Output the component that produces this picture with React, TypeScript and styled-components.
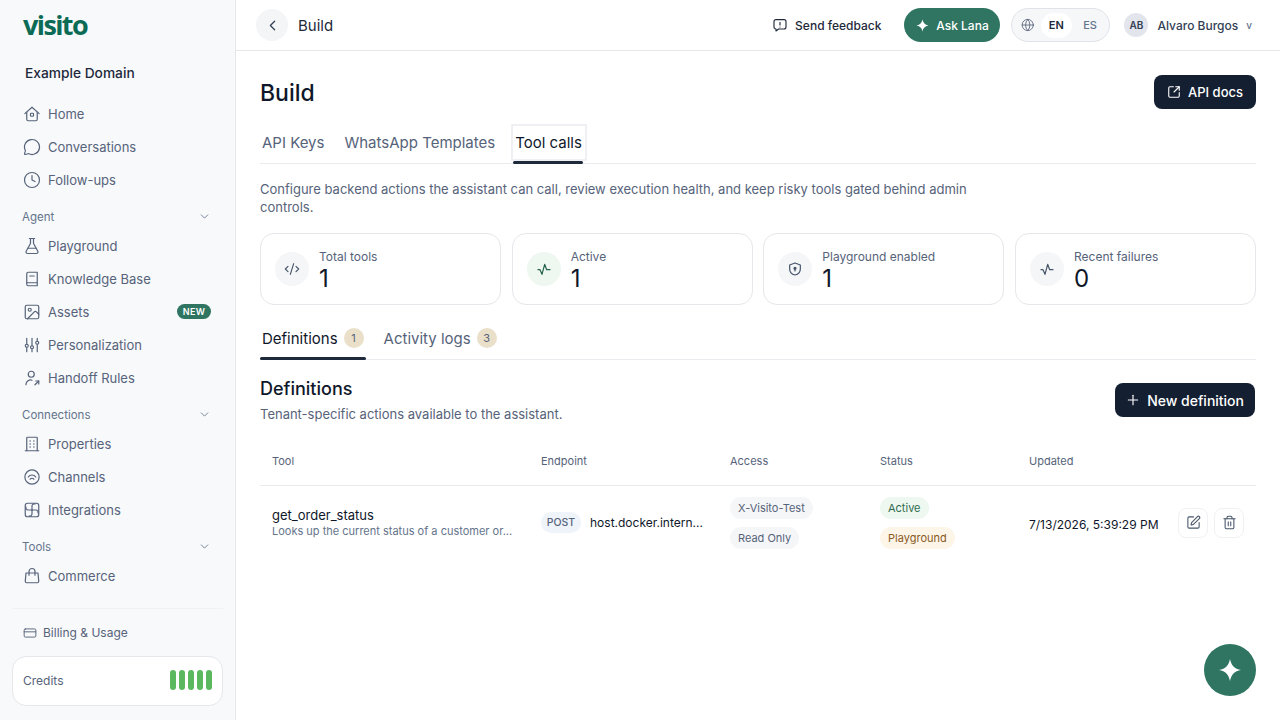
import React from 'react';
import styled, { createGlobalStyle } from 'styled-components';
import {
  ChevronDown,
  ChevronLeft,
  Clock,
  CodeXml,
  CreditCard,
  FlaskConical,
  Globe,
  Image as ImageIcon,
  MessageCircle,
  Plus,
  SquareArrowOutUpRight,
  SquarePen,
  Trash2,
} from 'lucide-react';

const GlobalStyle = createGlobalStyle`
  html, body {
    margin: 0;
    height: 100%;
    background: #fff;
    font-family: Inter, "Liberation Sans", sans-serif;
    color: #0f172a;
  }
  * { box-sizing: border-box; }
`;

const Shell = styled.div`
  display: flex;
  width: 1280px;
  height: 720px;
  overflow: hidden;
`;

const Sidebar = styled.aside`
  width: 236px;
  flex-shrink: 0;
  height: 720px;
  display: flex;
  flex-direction: column;
  background: #f8f9fb;
  border-right: 1px solid #e5e7eb;
  padding: 0 12px;
`;

const Logo = styled.div`
  height: 50px;
  padding: 0 0 2px 11px;
  display: flex;
  align-items: center;
  font-family: "Open Sans", sans-serif;
  font-size: 27px;
  font-weight: 700;
  letter-spacing: -1.6px;
  color: #0c6b55;
`;

const Domain = styled.div`
  height: 47px;
  padding: 0 13px 2px;
  display: flex;
  align-items: center;
  font-size: 13.75px;
  font-weight: 500;
  color: #1e293b;
`;

const Nav = styled.nav`
  display: flex;
  flex-direction: column;
`;

const NavItem = styled.div`
  height: 33px;
  display: flex;
  align-items: center;
  gap: 7px;
  padding: 0 12px 0 11px;
  font-size: 13px;
  color: #56637a;
  svg { flex-shrink: 0; }
`;

const NewBadge = styled.span`
  margin-left: auto;
  height: 15px;
  width: 34px;
  border-radius: 8px;
  background: #2f7561;
  color: #fff;
  font-size: 9px;
  font-weight: 600;
  letter-spacing: 0.3px;
  display: flex;
  align-items: center;
  justify-content: center;
`;

const SectionLabel = styled.div`
  height: 33px;
  padding: 8px 12px 0 10px;
  display: flex;
  align-items: center;
  justify-content: space-between;
  font-size: 11.5px;
  color: #64748b;
`;

const SidebarFooter = styled.div`
  margin-top: 16px;
  border-top: 1px solid #f0f1f4;
  padding-top: 7px;
`;

const BillingLink = styled.div`
  height: 33px;
  display: flex;
  align-items: center;
  gap: 6px;
  padding: 0 11px;
  font-size: 12px;
  color: #56637a;
`;

const CreditsCard = styled.div`
  margin-top: 7px;
  height: 50px;
  background: #fff;
  border: 1px solid #e5e7eb;
  border-radius: 14px;
  padding: 0 10px 2px;
  display: flex;
  align-items: center;
  justify-content: space-between;
  font-size: 12px;
  color: #56637a;
`;

const CreditBars = styled.div`
  display: flex;
  gap: 3px;
`;

const CreditBar = styled.span`
  width: 6px;
  height: 20px;
  border-radius: 3px;
  background: #5cb85f;
`;

const Content = styled.div`
  flex: 1;
  min-width: 0;
  display: flex;
  flex-direction: column;
`;

const Header = styled.header`
  height: 51px;
  flex-shrink: 0;
  display: flex;
  align-items: center;
  border-bottom: 1px solid #e5e7eb;
  padding: 0 20px;
`;

const BackButton = styled.button`
  width: 32px;
  height: 32px;
  border: 0;
  padding: 0;
  border-radius: 50%;
  background: #f4f5f7;
  color: #334155;
  display: flex;
  align-items: center;
  justify-content: center;
`;

const HeaderTitle = styled.div`
  margin-left: 10px;
  font-size: 15px;
  color: #1e293b;
`;

const Feedback = styled.div`
  margin-left: auto;
  display: flex;
  align-items: center;
  gap: 7px;
  font-size: 12px;
  font-weight: 500;
  color: #1e293b;
`;

const AskButton = styled.button`
  margin-left: 23px;
  height: 34px;
  width: 96px;
  border: 0;
  border-radius: 17px;
  background: #2f7561;
  color: #fff;
  font: 500 12px Inter, sans-serif;
  display: flex;
  align-items: center;
  justify-content: center;
  gap: 7px;
`;

const LangSwitch = styled.div`
  margin-left: 11px;
  height: 34px;
  width: 99px;
  border: 1px solid #dfe3e9;
  border-radius: 17px;
  background: #f6f7f9;
  display: flex;
  align-items: center;
  padding: 0 4px 0 9px;
  color: #56637a;
`;

const LangOption = styled.span<{ $active?: boolean }>`
  width: 32px;
  height: 25px;
  border-radius: 13px;
  display: flex;
  align-items: center;
  justify-content: center;
  font-size: 11px;
  font-weight: ${(props) => (props.$active ? 600 : 500)};
  color: ${(props) => (props.$active ? '#1e293b' : '#64748b')};
  background: ${(props) => (props.$active ? '#fff' : 'transparent')};
  &:first-of-type { margin-left: 6px; }
  &:last-of-type { margin-left: 3px; }
`;

const UserMenu = styled.div`
  margin-left: 14px;
  display: flex;
  align-items: center;
  font-size: 12px;
  font-weight: 500;
  color: #334155;
`;

const Avatar = styled.span`
  width: 24px;
  height: 24px;
  border-radius: 50%;
  background: #e2e5ec;
  color: #334155;
  font-size: 10px;
  font-weight: 600;
  display: flex;
  align-items: center;
  justify-content: center;
  margin-right: 9px;
`;

const Caret = styled.span`
  margin-left: 8px;
  margin-right: 8px;
  font-size: 10px;
  color: #64748b;
`;

const Main = styled.main`
  padding: 24px 24px 0;
`;

const TitleRow = styled.div`
  height: 34px;
  display: flex;
  align-items: center;
  justify-content: space-between;
`;

const PageTitle = styled.h1`
  margin: 1px 0 0;
  font-size: 23px;
  font-weight: 500;
  color: #0f172a;
`;

const DarkButton = styled.button`
  height: 34px;
  border: 0;
  border-radius: 8px;
  background: #151f32;
  color: #fff;
  font: 500 13px Inter, sans-serif;
  display: flex;
  align-items: center;
  gap: 7px;
  padding: 0 13px;
`;

const TopTabs = styled.div`
  margin-top: 15px;
  height: 40px;
  display: flex;
  align-items: stretch;
  border-bottom: 1px solid #e9ebef;
  padding-left: 2px;
  gap: 20px;
`;

const TopTab = styled.div<{ $active?: boolean }>`
  position: relative;
  display: flex;
  align-items: center;
  padding-bottom: 3px;
  font-size: 15px;
  color: ${(props) => (props.$active ? '#0f172a' : '#56637a')};
  ${(props) =>
    props.$active &&
    `
    &::before {
      content: '';
      position: absolute;
      left: -4px;
      right: -5px;
      top: 0;
      bottom: 2px;
      border: 2px solid #eef0f3;
    }
    &::after {
      content: '';
      position: absolute;
      left: -2px;
      right: -1px;
      bottom: -1px;
      height: 3px;
      border-radius: 2px;
      background: #1e293b;
    }
  `}
`;

const Description = styled.p`
  margin: 16px 0 0;
  max-width: 740px;
  font-size: 13px;
  line-height: 18px;
  color: #56637a;
`;

const StatGrid = styled.div`
  margin-top: 17px;
  display: grid;
  grid-template-columns: repeat(4, 1fr);
  gap: 10.67px;
`;

const StatCard = styled.div`
  height: 72px;
  border: 1px solid #e5e7eb;
  border-radius: 14px;
  padding: 0 14px;
  display: flex;
  align-items: center;
  gap: 10px;
`;

const StatIcon = styled.span<{ $green?: boolean }>`
  width: 34px;
  height: 34px;
  flex-shrink: 0;
  border-radius: 50%;
  display: flex;
  align-items: center;
  justify-content: center;
  background: ${(props) => (props.$green ? '#eef8f0' : '#f5f6f8')};
  color: ${(props) => (props.$green ? '#26634f' : '#475569')};
`;

const StatText = styled.div`
  padding-top: 5px;
`;

const StatLabel = styled.div`
  font-size: 12px;
  line-height: 15px;
  color: #56637a;
`;

const StatValue = styled.div`
  font-size: 24px;
  line-height: 30px;
  color: #0f172a;
`;

const SubTabs = styled.div`
  margin-top: 16px;
  height: 39px;
  display: flex;
  align-items: stretch;
  gap: 16px;
  border-bottom: 1px solid #e9ebef;
`;

const SubTab = styled.div<{ $active?: boolean }>`
  position: relative;
  display: flex;
  align-items: center;
  gap: 6px;
  padding: 0 2px 4px;
  font-size: 15px;
  color: ${(props) => (props.$active ? '#0f172a' : '#56637a')};
  ${(props) =>
    props.$active &&
    `
    &::after {
      content: '';
      position: absolute;
      left: 0;
      right: 0;
      bottom: -1px;
      height: 3px;
      border-radius: 2px;
      background: #1e293b;
    }
  `}
`;

const CountBadge = styled.span`
  width: 20px;
  height: 20px;
  border-radius: 50%;
  background: #eadfc8;
  color: #56637a;
  font-size: 11px;
  display: flex;
  align-items: center;
  justify-content: center;
`;

const SectionHead = styled.div`
  margin-top: 15px;
  padding-right: 1px;
  display: flex;
  align-items: flex-start;
  justify-content: space-between;
`;

const SectionTitle = styled.h2`
  margin: 0;
  font-size: 18px;
  line-height: 28px;
  font-weight: 500;
  color: #0f172a;
`;

const SectionText = styled.p`
  margin: 2px 0 0;
  font-size: 13px;
  line-height: 18px;
  color: #56637a;
`;

const NewButton = styled(DarkButton)`
  margin-top: 8px;
  gap: 6px;
  padding: 0 11px 0 10px;
  font-size: 14px;
`;

const Table = styled.table`
  margin-top: 14px;
  width: 100%;
  border-collapse: collapse;
  table-layout: fixed;
`;

const Th = styled.th`
  height: 48px;
  padding: 0 12px;
  border-bottom: 1px solid #e9ebef;
  text-align: left;
  font-size: 11px;
  font-weight: 400;
  color: #56637a;
`;

const Td = styled.td`
  height: 75px;
  padding: 0 12px;
  vertical-align: middle;
`;

const ToolName = styled.div`
  font-size: 13px;
  line-height: 18px;
  color: #0f172a;
`;

const ToolDesc = styled.div`
  font-size: 11px;
  line-height: 15px;
  color: #64748b;
  white-space: nowrap;
`;

const EndpointCell = styled.div`
  display: flex;
  align-items: center;
  gap: 9px;
  font-size: 12px;
  color: #0f172a;
  white-space: nowrap;
`;

const MethodPill = styled.span`
  width: 40px;
  height: 21px;
  border-radius: 11px;
  background: #eff3fa;
  color: #56637a;
  font-size: 10.5px;
  font-weight: 500;
  display: flex;
  align-items: center;
  justify-content: center;
`;

const PillStack = styled.div`
  display: flex;
  flex-direction: column;
  align-items: flex-start;
  gap: 8px;
`;

const tones = {
  gray: ['#f5f6f8', '#56637a'],
  green: ['#eef8f0', '#2f6b4f'],
  amber: ['#fdf5e8', '#8a5a1f'],
};

const Pill = styled.span<{ $tone: keyof typeof tones }>`
  height: 22px;
  padding: 0 8px;
  border-radius: 11px;
  display: inline-flex;
  align-items: center;
  font-size: 11px;
  background: ${(props) => tones[props.$tone][0]};
  color: ${(props) => tones[props.$tone][1]};
`;

const DateText = styled.span`
  font-size: 12px;
  color: #0f172a;
  white-space: nowrap;
`;

const Actions = styled.div`
  display: flex;
  gap: 6px;
  margin-left: -4px;
`;

const IconButton = styled.button`
  width: 30px;
  height: 30px;
  padding: 0;
  border: 1px solid #f0f1f4;
  border-radius: 8px;
  background: #fff;
  color: #475569;
  display: flex;
  align-items: center;
  justify-content: center;
`;

const Fab = styled.button`
  position: fixed;
  right: 24px;
  bottom: 24px;
  width: 52px;
  height: 52px;
  padding: 0;
  border: 0;
  border-radius: 50%;
  background: #2f7561;
  color: #fff;
  display: flex;
  align-items: center;
  justify-content: center;
`;

const Stroke: React.FC<{ size?: number; width?: number; children: React.ReactNode }> = ({
  size = 18,
  width = 1.6,
  children,
}) => (
  <svg
    width={size}
    height={size}
    viewBox="0 0 24 24"
    fill="none"
    stroke="currentColor"
    strokeWidth={width}
    strokeLinecap="round"
    strokeLinejoin="round"
  >
    {children}
  </svg>
);

const Spark: React.FC<{ size: number }> = ({ size }) => (
  <svg width={size} height={size} viewBox="0 0 24 24" fill="currentColor">
    <path d="M12 1c1.300 6.600 4.400 9.700 11 11-6.600 1.300-9.700 4.400-11 11-1.300-6.600-4.400-9.700-11-11 6.600-1.300 9.700-4.400 11-11z" />
  </svg>
);

const HomeIcon = () => (
  <Stroke>
    <path d="M2.500 11.500L12 3l9.500 8.500" />
    <path d="M5 9.500V19a2 2 0 0 0 2 2h10a2 2 0 0 0 2-2V9.500" />
    <rect x="10" y="11" width="4" height="4" rx="1" />
  </Stroke>
);

const BookIcon = () => (
  <Stroke>
    <path d="M5 5a2 2 0 0 1 2-2h12v18H7a2 2 0 0 1-2-2z" />
    <path d="M5 17h14" />
    <path d="M9 8h6" />
  </Stroke>
);

const SlidersIcon = () => (
  <Stroke>
    <path d="M5 3v8M5 15v6M12 3v10M12 17v4M19 3v4M19 11v10" />
    <circle cx="5" cy="13" r="2" />
    <circle cx="12" cy="15" r="2" />
    <circle cx="19" cy="9" r="2" />
  </Stroke>
);

const HandoffIcon = () => (
  <Stroke>
    <circle cx="11" cy="7" r="4" />
    <path d="M4 21v-1a6 6 0 0 1 8-5" />
    <path d="M16 21l5-5" />
    <path d="M17 16h4v4" />
  </Stroke>
);

const BuildingIcon = () => (
  <Stroke>
    <path d="M5 21V4a1 1 0 0 1 1-1h12a1 1 0 0 1 1 1v17" />
    <path d="M3 21h18" />
    <path d="M9.500 8h.01M14.500 8h.01M9.500 12h.01M14.500 12h.01M9.500 16h.01M14.500 16h.01" strokeWidth={2} />
  </Stroke>
);

const ChannelsIcon = () => (
  <Stroke>
    <circle cx="12" cy="12" r="9.500" />
    <path d="M7 14a6 6 0 0 1 10 0" transform="translate(0 -2)" />
    <path d="M9.500 15a3 3 0 0 1 5 0" />
  </Stroke>
);

const IntegrationsIcon = () => (
  <Stroke>
    <rect x="3" y="3" width="18" height="18" rx="3" />
    <path d="M12 12V7a3 3 0 0 1 4-3" />
    <path d="M12 12h5a3 3 0 0 1 3 4" />
    <path d="M12 12v5a3 3 0 0 1-4 3" />
    <path d="M12 12H7a3 3 0 0 1-3-4" />
  </Stroke>
);

const BagIcon = () => (
  <Stroke>
    <path d="M4 8h16l1 11a2 2 0 0 1-2 2H5a2 2 0 0 1-2-2z" />
    <path d="M8 11V6a4 4 0 0 1 8 0v5" />
  </Stroke>
);

const FeedbackIcon = () => (
  <Stroke size={16} width={1.7}>
    <path d="M6 4h12a3 3 0 0 1 3 3v8a3 3 0 0 1-3 3h-8l-4 3v-3a3 3 0 0 1-3-3V7a3 3 0 0 1 3-3z" />
    <path d="M12 8v4M12 15h.01" />
  </Stroke>
);

const PulseIcon = () => (
  <Stroke size={16} width={1.8}>
    <path d="M3 13h3l3 7 4-15 3 8h5" />
  </Stroke>
);

const ShieldIcon = () => (
  <Stroke size={16} width={1.8}>
    <path d="M12 3l8 3v6c0 5-3.500 8-8 9-4.500-1-8-4-8-9V6z" />
    <circle cx="12" cy="11" r="1.500" fill="currentColor" />
    <path d="M12 12v3" />
  </Stroke>
);

const Section: React.FC<{ label: string }> = ({ label }) => (
  <SectionLabel>
    {label}
    <ChevronDown size={13} strokeWidth={1.6} />
  </SectionLabel>
);

const stats = [
  { label: 'Total tools', value: 1, icon: <CodeXml size={16} strokeWidth={1.7} /> },
  { label: 'Active', value: 1, icon: <PulseIcon />, green: true },
  { label: 'Playground enabled', value: 1, icon: <ShieldIcon /> },
  { label: 'Recent failures', value: 0, icon: <PulseIcon /> },
];

const App: React.FC = () => {
  return (
    <Shell>
      <GlobalStyle />
      <Sidebar>
        <Logo>visito</Logo>
        <Domain>Example Domain</Domain>
        <Nav>
          <NavItem><HomeIcon />Home</NavItem>
          <NavItem><MessageCircle size={18} strokeWidth={1.6} />Conversations</NavItem>
          <NavItem><Clock size={18} strokeWidth={1.6} />Follow-ups</NavItem>
          <Section label="Agent" />
          <NavItem><FlaskConical size={18} strokeWidth={1.6} />Playground</NavItem>
          <NavItem><BookIcon />Knowledge Base</NavItem>
          <NavItem>
            <ImageIcon size={18} strokeWidth={1.6} />Assets
            <NewBadge>NEW</NewBadge>
          </NavItem>
          <NavItem><SlidersIcon />Personalization</NavItem>
          <NavItem><HandoffIcon />Handoff Rules</NavItem>
          <Section label="Connections" />
          <NavItem><BuildingIcon />Properties</NavItem>
          <NavItem><ChannelsIcon />Channels</NavItem>
          <NavItem><IntegrationsIcon />Integrations</NavItem>
          <Section label="Tools" />
          <NavItem><BagIcon />Commerce</NavItem>
        </Nav>
        <SidebarFooter>
          <BillingLink><CreditCard size={14} strokeWidth={1.6} />Billing &amp; Usage</BillingLink>
          <CreditsCard>
            Credits
            <CreditBars>
              {[0, 1, 2, 3, 4].map((i) => (
                <CreditBar key={i} />
              ))}
            </CreditBars>
          </CreditsCard>
        </SidebarFooter>
      </Sidebar>

      <Content>
        <Header>
          <BackButton><ChevronLeft size={17} strokeWidth={1.8} /></BackButton>
          <HeaderTitle>Build</HeaderTitle>
          <Feedback><FeedbackIcon />Send feedback</Feedback>
          <AskButton><Spark size={13} />Ask Lana</AskButton>
          <LangSwitch>
            <Globe size={14} strokeWidth={1.5} />
            <LangOption $active>EN</LangOption>
            <LangOption>ES</LangOption>
          </LangSwitch>
          <UserMenu>
            <Avatar>AB</Avatar>
            Alvaro Burgos
            <Caret>v</Caret>
          </UserMenu>
        </Header>

        <Main>
          <TitleRow>
            <PageTitle>Build</PageTitle>
            <DarkButton><SquareArrowOutUpRight size={14} strokeWidth={1.9} />API docs</DarkButton>
          </TitleRow>

          <TopTabs>
            <TopTab>API Keys</TopTab>
            <TopTab>WhatsApp Templates</TopTab>
            <TopTab $active>Tool calls</TopTab>
          </TopTabs>

          <Description>
            Configure backend actions the assistant can call, review execution health, and keep risky
            tools gated behind admin controls.
          </Description>

          <StatGrid>
            {stats.map((stat) => (
              <StatCard key={stat.label}>
                <StatIcon $green={stat.green}>{stat.icon}</StatIcon>
                <StatText>
                  <StatLabel>{stat.label}</StatLabel>
                  <StatValue>{stat.value}</StatValue>
                </StatText>
              </StatCard>
            ))}
          </StatGrid>

          <SubTabs>
            <SubTab $active>Definitions <CountBadge>1</CountBadge></SubTab>
            <SubTab>Activity logs <CountBadge>3</CountBadge></SubTab>
          </SubTabs>

          <SectionHead>
            <div>
              <SectionTitle>Definitions</SectionTitle>
              <SectionText>Tenant-specific actions available to the assistant.</SectionText>
            </div>
            <NewButton><Plus size={16} strokeWidth={1.7} />New definition</NewButton>
          </SectionHead>

          <Table>
            <colgroup>
              <col style={{ width: 269 }} />
              <col style={{ width: 189 }} />
              <col style={{ width: 150 }} />
              <col style={{ width: 149 }} />
              <col style={{ width: 153 }} />
              <col />
            </colgroup>
            <thead>
              <tr>
                <Th>Tool</Th>
                <Th>Endpoint</Th>
                <Th>Access</Th>
                <Th>Status</Th>
                <Th>Updated</Th>
                <Th />
              </tr>
            </thead>
            <tbody>
              <tr>
                <Td>
                  <ToolName>get_order_status</ToolName>
                  <ToolDesc>Looks up the current status of a customer or...</ToolDesc>
                </Td>
                <Td>
                  <EndpointCell>
                    <MethodPill>POST</MethodPill>
                    host.docker.intern...
                  </EndpointCell>
                </Td>
                <Td>
                  <PillStack>
                    <Pill $tone="gray">X-Visito-Test</Pill>
                    <Pill $tone="gray">Read Only</Pill>
                  </PillStack>
                </Td>
                <Td>
                  <PillStack>
                    <Pill $tone="green">Active</Pill>
                    <Pill $tone="amber">Playground</Pill>
                  </PillStack>
                </Td>
                <Td><DateText>7/13/2026, 5:39:29 PM</DateText></Td>
                <Td>
                  <Actions>
                    <IconButton><SquarePen size={15} strokeWidth={1.7} /></IconButton>
                    <IconButton><Trash2 size={15} strokeWidth={1.7} /></IconButton>
                  </Actions>
                </Td>
              </tr>
            </tbody>
          </Table>
        </Main>
      </Content>

      <Fab><Spark size={24} /></Fab>
    </Shell>
  );
};

export default App;
